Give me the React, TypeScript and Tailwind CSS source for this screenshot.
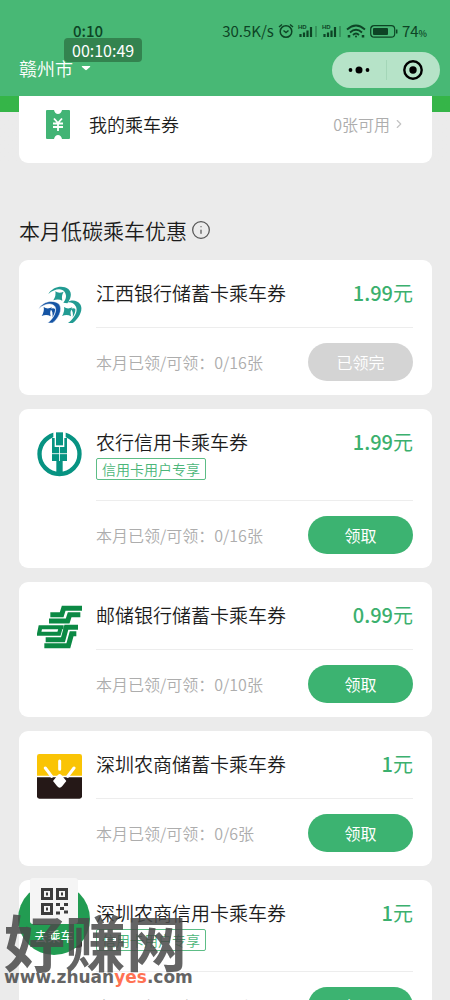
import React from "react";
import { ChevronRight, Info } from "lucide-react";

type Coupon = {
  id: string;
  title: string;
  price: string;
  quota: string;
  tag?: string;
  soldOut?: boolean;
  Logo: () => React.JSX.Element;
};

const CRESCENT =
  "M0 24 C13 2 42 -4 60 9 C76 26 56 58 41 67 L27 67 C44 54 56 31 49 18 C41 6 20 7 0 24Z";
const STAR = "M15 19Q26 27 40 20Q32 33 36 47Q24 40 9 46Q18 32 15 19Z";
const HOOK = "M35 25 Q44 20 49 25 Q50 36 41 50 Q44 32 35 25Z";

function JiangxiLogo() {
  return (
    <svg viewBox="0 0 135 135" className="size-[45px]" aria-hidden="true">
      <g fill="#219b92">
        <g transform="translate(34 9)">
          <path d="M0 24 C13 2 42 -4 60 9 C74 22 66 40 57 52 L45 50 C56 36 54 26 49 18 C41 6 20 7 0 24Z" />
          <path d={STAR} transform="translate(6 -3)" />
        </g>
        <g transform="translate(66 53)">
          <path d="M24 5 C36 -4 55 -2 63 10 C76 28 56 58 41 67 L27 67 C44 54 58 34 51 18 C46 8 37 4 24 5Z" />
          <path d={STAR} />
          <path d={HOOK} />
        </g>
      </g>
      <g fill="#1554a4" transform="translate(5 53)">
        <path d={CRESCENT} stroke="#fff" strokeWidth="1.500" />
        <path d={STAR} />
        <path d={HOOK} />
      </g>
    </svg>
  );
}

function AgriculturalLogo() {
  return (
    <svg viewBox="0 0 135 135" className="size-[45px]" aria-hidden="true">
      <circle cx="67.500" cy="66" r="60" fill="none" stroke="#079382" strokeWidth="13" />
      <path d="M49 0H86V24H49Z" fill="#fff" />
      <g fill="#079382">
        <path d="M57 1H78V40H57Z" />
        <path d="M45 18H53V45H82V18H90V87H77V127H58V87H45Z" />
      </g>
      <path d="M67.500 45V87M45 65H90" stroke="#fff" strokeWidth="2.500" />
    </svg>
  );
}

function PostalLogo() {
  return (
    <svg viewBox="0 0 135 135" className="size-[45px]" fill="none" stroke="#0b8944" strokeWidth="15" aria-hidden="true">
      <path d="M135 10H80L74 29H40" />
      <path d="M130 29H98L92 48H36" />
      <path d="M123 67H88L78 104H26" />
      <path d="M118 86H104L94 122H22" />
      <path d="M80 67H10L6 86H66L70 72" strokeWidth="12" />
    </svg>
  );
}

function ShenzhenLogo() {
  return (
    <svg viewBox="0 0 135 135" className="size-[45px]" aria-hidden="true">
      <path d="M7 0H128Q135 0 135 7V65H0V7Q0 0 7 0Z" fill="#fac405" />
      <path d="M0 70H135V127Q135 134 128 134H7Q0 134 0 127Z" fill="#251817" />
      <path d="M68 21V46M25 42L44 67M111 42L92 67" stroke="#fff" strokeWidth="9" strokeLinecap="round" />
      <path d="M68 60Q72 60 76 66L88 81L76 96Q68 106 60 96L48 81L60 66Q64 60 68 60Z" fill="#fff" />
    </svg>
  );
}

const coupons: Coupon[] = [
  { id: "jx", title: "江西银行储蓄卡乘车券", price: "1.99", quota: "0/16张", soldOut: true, Logo: JiangxiLogo },
  { id: "abc", title: "农行信用卡乘车券", price: "1.99", quota: "0/16张", tag: "信用卡用户专享", Logo: AgriculturalLogo },
  { id: "psbc", title: "邮储银行储蓄卡乘车券", price: "0.99", quota: "0/10张", Logo: PostalLogo },
  { id: "szd", title: "深圳农商储蓄卡乘车券", price: "1", quota: "0/6张", Logo: ShenzhenLogo },
  { id: "szc", title: "深圳农商信用卡乘车券", price: "1", quota: "0/6张", tag: "信用卡用户专享", Logo: ShenzhenLogo },
];

function CouponCard({ title, price, quota, tag, soldOut, Logo }: Coupon) {
  return (
    <li className="flex gap-[14px] rounded-[9px] bg-white pr-[19px] pl-[18px]">
      <div className="shrink-0 pt-[23px]">
        <Logo />
      </div>
      <div className="min-w-0 flex-1 pt-[19px] pb-[14px]">
        <div className="flex h-[28px] items-center justify-between">
          <h2 className="text-[19px] leading-[28px] font-[350] whitespace-nowrap text-[#1c1c1c]">{title}</h2>
          <span className="text-[20px] leading-[30px] whitespace-nowrap text-[#3bb06e]">
            <span className="font-medium">{price}</span>元
          </span>
        </div>
        {tag && (
          <div className="mt-[2px] flex">
            <span className="h-[22px] rounded-[2px] border border-[#5dbd86] px-[5px] text-[14px] leading-[20px] font-[350] text-[#4bb679]">
              {tag}
            </span>
          </div>
        )}
        <div className="mt-5 flex items-center justify-between border-t border-[#ededed] pt-[15px]">
          <p className="text-[16px] leading-[24px] font-[350] whitespace-nowrap text-[#adadad]">本月已领/可领：{quota}</p>
          <button
            type="button"
            disabled={soldOut}
            className="h-[38px] w-[105px] shrink-0 rounded-full bg-[#3cb371] text-[16px] text-white disabled:bg-[#d4d4d4] disabled:font-[350]"
          >
            {soldOut ? "已领完" : "领取"}
          </button>
        </div>
      </div>
    </li>
  );
}

function Signal() {
  return (
    <svg viewBox="0 0 20 16" className="h-4 w-5 overflow-visible" aria-hidden="true">
      <text x="0" y="6" fontSize="6" fontWeight="700" fill="#0d4425" fontFamily="Liberation Sans, sans-serif">HD</text>
      <path d="M2.500 11V14M6 9.500V14M9.500 7.500V14M13 4V14" stroke="#0d4425" strokeWidth="2.200" />
      <path d="M18 3V14" stroke="#0d4425" strokeWidth="1.500" opacity=".4" />
    </svg>
  );
}

function StatusBar() {
  return (
    <div className="flex h-[22px] items-center justify-between pr-[23px] pl-[73px] text-[#0d4425]">
      <span className="text-[15px] font-medium">0:10</span>
      <div className="flex items-center gap-1">
        <span className="text-[15px]">30.5K/s</span>
        <svg viewBox="0 0 16 16" className="size-4" fill="none" stroke="#0d4425" strokeWidth="1.500" aria-hidden="true">
          <circle cx="8" cy="8.500" r="5.800" />
          <path d="M1 4L4 1.500M15 4L12 1.500M5.500 7.500L8 9.500L10.500 7.500" />
        </svg>
        <Signal />
        <Signal />
        <svg viewBox="0 0 20 16" className="h-4 w-5" fill="none" stroke="#0d4425" strokeWidth="1.800" aria-hidden="true">
          <path d="M1 6.500Q10 -1.500 19 6.500M4 9.500Q10 4 16 9.500M7 12Q10 9 13 12" />
          <circle cx="10" cy="13.500" r="1" fill="#0d4425" stroke="none" />
          <path d="M3 14.500V12M17 12V14.500" strokeWidth="2.500" />
        </svg>
        <svg viewBox="0 0 28 13" className="h-[13px] w-7" aria-hidden="true">
          <rect x=".7" y=".7" width="24" height="11.500" rx="3.500" fill="none" stroke="#0d4425" strokeWidth="1.200" />
          <rect x="3" y="3" width="15" height="7" rx="1" fill="#0d4425" />
          <path d="M26.700 4.500V8.500" stroke="#0d4425" strokeWidth="1.500" />
        </svg>
        <span className="text-[15px]">
          74<span className="text-[9px] font-medium">%</span>
        </span>
      </div>
    </div>
  );
}

function Header() {
  return (
    <header className="relative z-10 shrink-0 bg-[#48b875] pt-5 pb-2">
      <StatusBar />
      <div className="mt-[10px] flex h-9 items-center justify-between pr-[10px] pl-[19px]">
        <button type="button" className="flex items-center gap-2 pb-1 text-[18px] font-[350] text-white">
          赣州市
          <svg viewBox="0 0 10 6" className="h-[6px] w-[10px]" fill="#fff" aria-hidden="true">
            <path d="M1 1H9Q9.500 1.500 9 2L5.500 5Q5 5.300 4.500 5L1 2Q.5 1.500 1 1Z" />
          </svg>
        </button>
        <div className="flex h-9 w-[108px] items-center rounded-full bg-[#b6e3c8]">
          <button type="button" aria-label="更多" className="flex flex-1 justify-center border-r border-[#a4d6b8]">
            <svg viewBox="0 0 24 20" className="h-5 w-6" aria-hidden="true">
              <circle cx="3.500" cy="10" r="1.900" />
              <circle cx="12" cy="10" r="3.500" />
              <circle cx="20.500" cy="10" r="1.900" />
            </svg>
          </button>
          <button type="button" aria-label="关闭" className="flex flex-1 justify-center">
            <svg viewBox="0 0 20 20" className="size-5" aria-hidden="true">
              <circle cx="10" cy="10" r="8.700" fill="none" stroke="#000" strokeWidth="2.400" />
              <circle cx="10" cy="10" r="3.700" />
            </svg>
          </button>
        </div>
      </div>
      <div className="absolute top-[38px] left-16 rounded-[4px] bg-[#33834f] px-2 text-[16px] leading-[24px] text-white">
        00:10:49
      </div>
    </header>
  );
}

function RideButton() {
  return (
    <button
      type="button"
      className="absolute bottom-[45px] left-[18px] flex size-[72px] flex-col items-center rounded-full bg-[#229c52] text-white"
    >
      <span className="-mt-[5px] flex h-[46px] w-[48px] items-center justify-center rounded-[3px] bg-[#f5f5f5]">
        <svg viewBox="0 0 27 27" className="size-[27px]" fill="none" stroke="#3c3c3c" strokeWidth="3" aria-hidden="true">
          <path d="M1.500 1.500H10.500V10.500H1.500ZM16.500 1.500H25.500V10.500H16.500ZM1.500 16.500H10.500V25.500H1.500Z" />
          <path d="M5 6H7M20 6H22M5 21H7M15 16.500H19M23 16.500H27M19 20.500H23M15 25H19M23 24H27" />
        </svg>
      </span>
      <span className="text-[13px] leading-[24px] whitespace-nowrap">去乘车</span>
    </button>
  );
}

function Watermark() {
  return (
    <div className="pointer-events-none absolute bottom-[14px] left-[4px] text-[#4a4a4a] opacity-85">
      <div className="text-[61px] leading-[54px] font-bold">好赚网</div>
      <div className="font-['DejaVu_Sans',sans-serif] text-[17px] leading-[18px] font-bold">
        www.zhuan<span className="text-[#ff5a36]">yes</span>.com
      </div>
    </div>
  );
}

export default function App() {
  return (
    <div className="relative flex h-screen flex-col overflow-hidden bg-[#ebebeb] font-['Noto_Sans_CJK_SC',sans-serif]">
      <Header />
      <main className="min-h-0 flex-1 overflow-y-auto [scrollbar-width:none]">
        <div className="bg-linear-to-b from-[#35b548] from-[16px] to-[#ebebeb] to-[16px] pr-[18px] pl-[19px]">
          <a href="#coupons" className="flex h-[67px] items-center rounded-b-[9px] bg-white pr-[26px] pb-[11px] pl-[27px]">
            <svg viewBox="0 0 24 29" className="h-[29px] w-6" aria-hidden="true">
              <path d="M1 0H8Q9 4 12 4T16 0H23Q24 0 24 1V28Q24 29 23 29H16Q15 25 12 25T8 29H1Q0 29 0 28V1Q0 0 1 0Z" fill="#42b475" />
              <path d="M8 8.500L12 13L16 8.500M12 13V21M7 13.500H17M7 17H17" fill="none" stroke="#fff" strokeWidth="1.800" />
            </svg>
            <span className="ml-[19px] text-[18px] font-[350] text-[#1c1c1c]">我的乘车券</span>
            <span className="ml-auto text-[16px] font-[350] text-[#adadad]">0张可用</span>
            <ChevronRight className="ml-[2px] size-[14px] text-[#c4c4c4]" strokeWidth={2} />
          </a>
        </div>
        <section className="pr-[18px] pl-[19px]">
          <div className="flex items-center gap-1 pt-[52px] pb-[15px]">
            <h1 className="text-[21px] leading-[30px] font-[350] text-[#1c1c1c]">本月低碳乘车优惠</h1>
            <Info className="size-5 text-[#555]" strokeWidth={1.5} />
          </div>
          <ul id="coupons" className="flex flex-col gap-[14px] pb-6">
            {coupons.map((c) => (
              <CouponCard key={c.id} {...c} />
            ))}
          </ul>
        </section>
      </main>
      <RideButton />
      <Watermark />
    </div>
  );
}
